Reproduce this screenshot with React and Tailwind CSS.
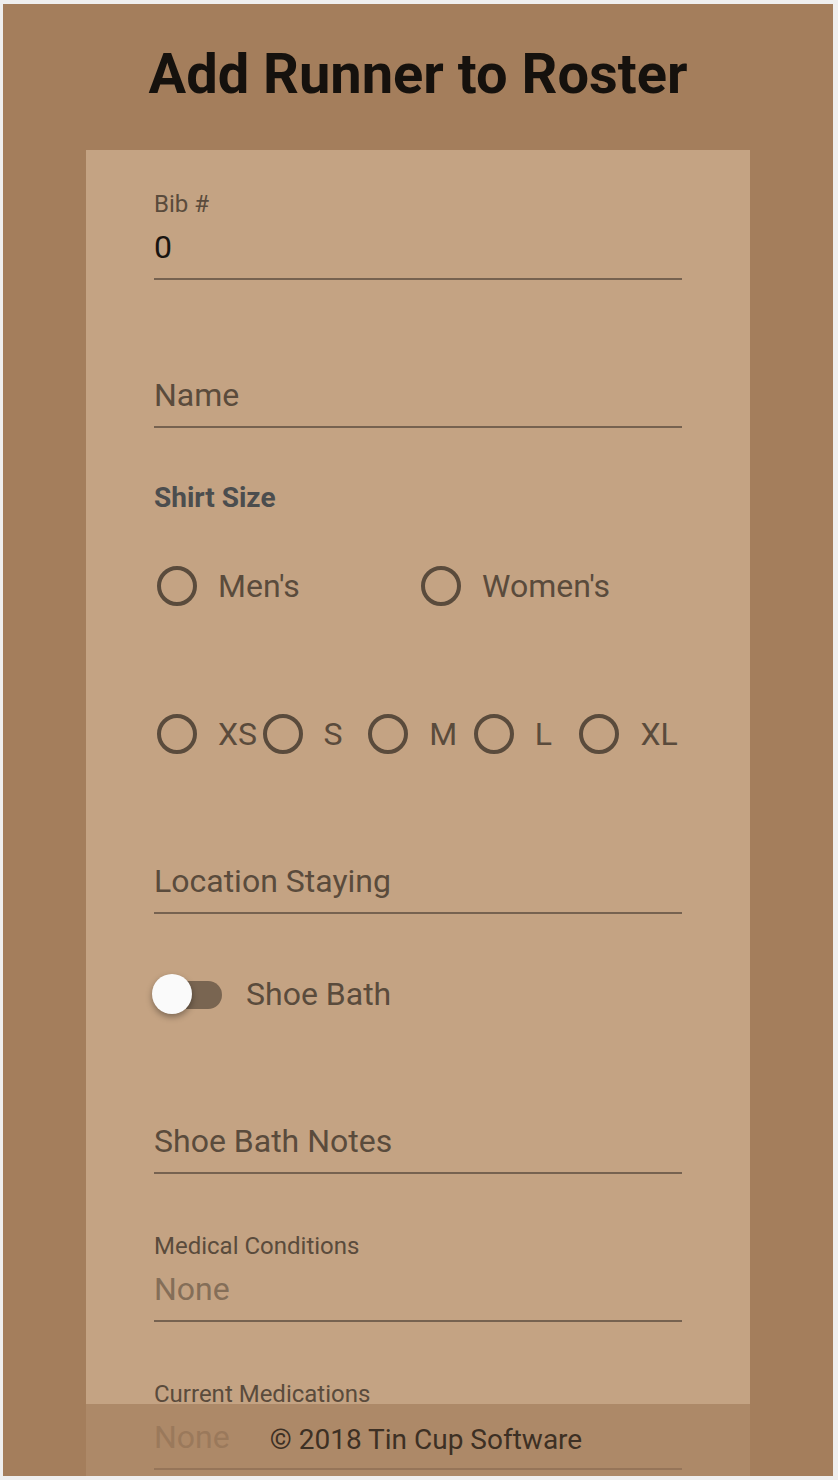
import React from "react";

function Field({ label, value, shrink = true, valueClass = "text-[#191511]" }) {
  return (
    <div>
      <div className="h-[24px] text-[24px] leading-[24px] text-[#5a4b3c] whitespace-nowrap">
        {shrink ? label : ""}
      </div>
      <div
        className={
          "mt-[15px] h-[32px] text-[32px] leading-[32px] whitespace-nowrap " +
          (shrink ? valueClass : "text-[#5a4b3c]")
        }
      >
        {shrink ? value : label}
      </div>
      <div className="mt-[15px] h-[2px] bg-[#766250]" />
    </div>
  );
}

function Radio({ label }) {
  return (
    <div className="flex items-center h-[48px] pl-[3px]">
      <div className="w-[40px] h-[40px] shrink-0 rounded-full border-[4px] border-[#5a4b3c]" />
      <span className="ml-[21px] text-[32px] leading-[32px] text-[#5a4b3c] whitespace-nowrap">
        {label}
      </span>
    </div>
  );
}

export default function App() {
  return (
    <div className="w-[838px] h-[1480px] bg-[#efefef] pl-[3px] pt-[4px] pr-[5px] pb-[4px] font-['Roboto',sans-serif]">
      <div className="relative h-full bg-[#a47e5c] overflow-hidden flex flex-col items-center">
        <div className="h-[146px] shrink-0 pt-[41px] text-center">
          <h1 className="text-[56px] leading-[58px] font-bold text-[#15110d] whitespace-nowrap">
            Add Runner to Roster
          </h1>
        </div>
        <div className="w-[664px] flex-1 bg-[#c4a383] px-[68px] pt-[42px]">
          <Field label="Bib #" value="0" />
          <div className="mt-[60px]">
            <Field label="Name" shrink={false} />
          </div>
          <div className="mt-[56px] h-[28px] text-[28px] leading-[28px] font-bold text-[#4b4d4e]">
            Shirt Size
          </div>
          <div className="mt-[50px] grid grid-cols-2">
            <Radio label="Men's" />
            <Radio label="Women's" />
          </div>
          <div className="mt-[100px] grid grid-cols-5">
            <Radio label="XS" />
            <Radio label="S" />
            <Radio label="M" />
            <Radio label="L" />
            <Radio label="XL" />
          </div>
          <div className="mt-[68px]">
            <Field label="Location Staying" shrink={false} />
          </div>
          <div className="mt-[56px] h-[48px] flex items-center">
            <div className="relative w-[70px] h-[40px] ml-[-2px] shrink-0">
              <div className="absolute left-[2px] top-[7px] w-[68px] h-[28px] rounded-full bg-[#796551]" />
              <div className="absolute left-0 top-0 w-[40px] h-[40px] rounded-full bg-[#fafafa] shadow-[0_3px_6px_rgba(0,0,0,0.35)]" />
            </div>
            <span className="ml-[24px] text-[32px] leading-[32px] text-[#5a4b3c] whitespace-nowrap">
              Shoe Bath
            </span>
          </div>
          <div className="mt-[68px]">
            <Field label="Shoe Bath Notes" shrink={false} />
          </div>
          <div className="mt-[60px]">
            <Field label="Medical Conditions" value="None" valueClass="text-[#846e58]" />
          </div>
          <div className="mt-[60px]">
            <Field label="Current Medications" value="None" valueClass="text-[#846e58]" />
          </div>
        </div>
        <div className="absolute bottom-0 left-[83px] w-[664px] h-[72px] bg-[#a47e5c]/70 flex items-center justify-center pl-[16px]">
          <span className="text-[28px] leading-[28px] text-[#3d3024] whitespace-nowrap">
            © 2018 Tin Cup Software
          </span>
        </div>
      </div>
    </div>
  );
}
